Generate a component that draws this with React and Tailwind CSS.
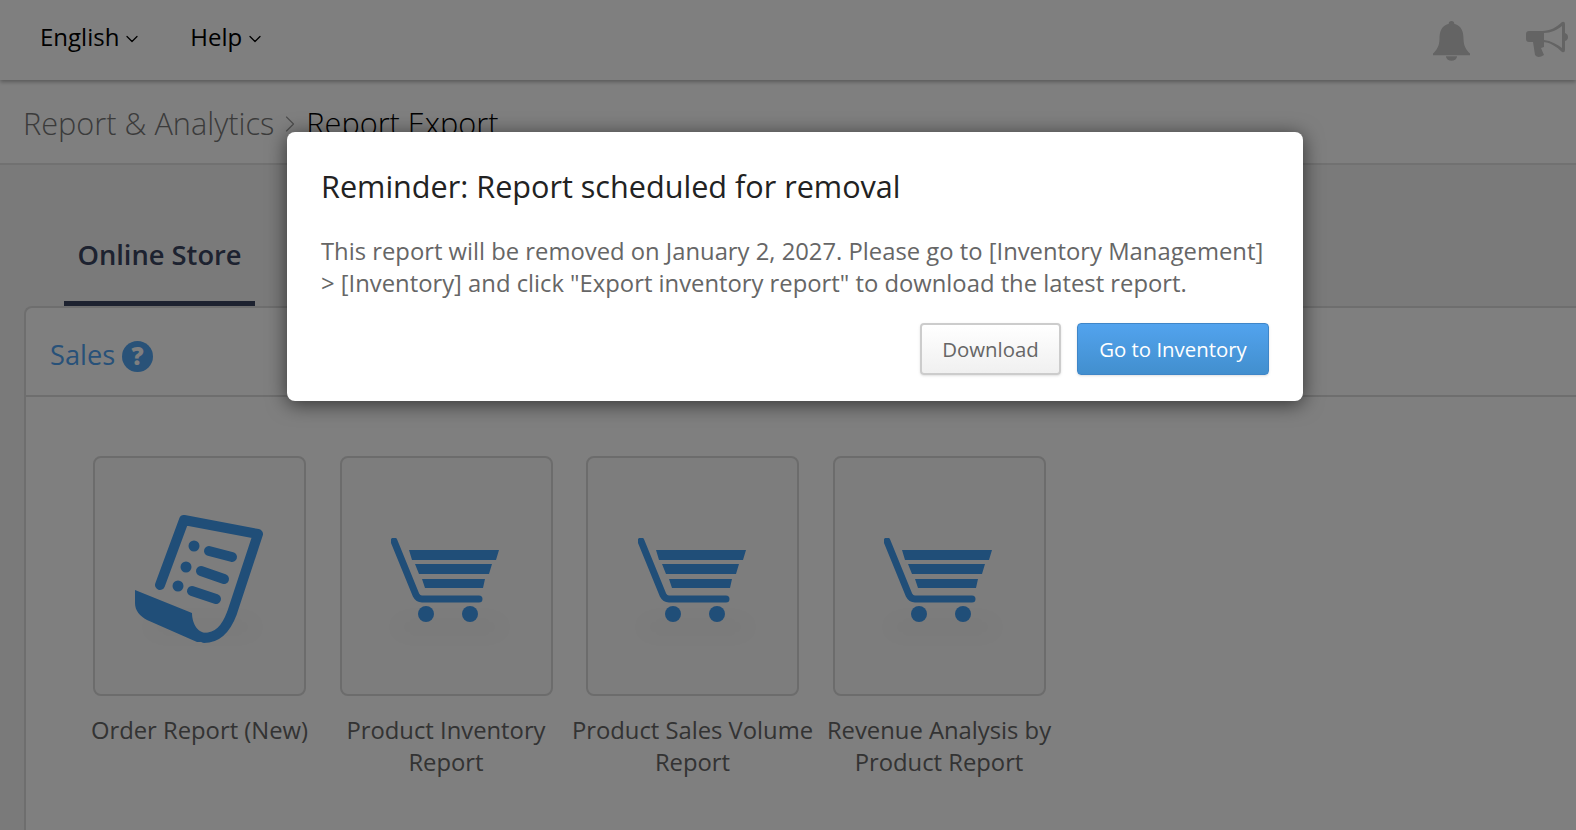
import { ChevronDown, ChevronRight } from 'lucide-react'

const font = { fontFamily: '"Open Sans", sans-serif' }

function OrderIcon() {
  return (
    <svg width="132" height="132" viewBox="0 0 132 132" className="mt-[5px]">
      <path d="M26 72 L50 7 L124 21 L98 100 C92 116 84 125 70 125" fill="none" stroke="#419cf0" strokeWidth="10" strokeLinecap="round" strokeLinejoin="round" />
      <path d="M1 77 L58 100 C58 108 62 120 73 120 C78 120 84 118 90 112 C84 124 74 130 63 129 L13 107 C6 103 1 98 1 90 Z" fill="#419cf0" />
      <circle cx="60" cy="33" r="5.5" fill="#419cf0" />
      <circle cx="52" cy="54" r="5.5" fill="#419cf0" />
      <circle cx="44" cy="73" r="5.5" fill="#419cf0" />
      <path d="M75 38 L98 44 M67 58 L90 66 M58 78 L82 86" stroke="#419cf0" strokeWidth="10" strokeLinecap="round" />
    </svg>
  )
}

function CartIcon() {
  return (
    <svg width="110" height="86" viewBox="0 0 110 86" className="mt-[10px]">
      <path d="M3 3 L25 57 Q27 61 31 61 L88 61" fill="none" stroke="#419cf0" strokeWidth="7" strokeLinecap="round" strokeLinejoin="round" />
      <path d="M18 12 L108 12 L105 22 L21 22 Z M24 26 L101 26 L98 36 L28 36 Z M31 41 L94 41 L92 50 L34 50 Z" fill="#419cf0" />
      <circle cx="35" cy="76" r="8" fill="#419cf0" />
      <circle cx="79" cy="76" r="8" fill="#419cf0" />
    </svg>
  )
}

function ReportCard({ label, icon }) {
  return (
    <div className="w-[213px] flex flex-col items-center shrink-0">
      <div className="relative w-[213px] h-[240px] border-2 border-[#d8d8d8] rounded-lg bg-[#fbfbfb] flex items-center justify-center">
        <div className="absolute left-[50px] top-[160px] w-[115px] h-[18px] rounded-full bg-black/[0.03] blur-md" />
        <div className="relative flex">{icon}</div>
      </div>
      <p className="mt-[18px] w-[250px] -mx-[18px] text-center text-[23.8px] leading-[32px] text-[#666]">{label}</p>
    </div>
  )
}

export default function App() {
  return (
    <div className="relative h-screen overflow-hidden bg-[#f4f4f4]" style={font}>
      <div className="h-20 bg-white shadow-[0_2px_4px_rgba(0,0,0,0.3)] flex items-center justify-between pl-10 pr-2 relative">
        <div className="flex items-center gap-[48px] text-[24px] text-black pb-[6px]">
          <span className="flex items-center gap-[3px]">English <ChevronDown size={20} strokeWidth={1.5} className="mt-[3px]" /></span>
          <span className="flex items-center gap-[3px]">Help <ChevronDown size={20} strokeWidth={1.5} className="mt-[3px]" /></span>
        </div>
        <div className="flex items-center gap-[56px]">
          <svg width="37" height="41" viewBox="0 0 40 44" fill="#c8c8c8">
            <path d="M20 1 a3 3 0 0 1 3 3 C31 6 33 13 33 20 C33 28 36 32 40 36 L40 38 L0 38 L0 36 C4 32 7 28 7 20 C7 13 9 6 17 4 a3 3 0 0 1 3 -3 Z" />
            <path d="M14 39 a6 5 0 0 0 12 0 Z" />
          </svg>
          <svg width="42" height="38" viewBox="0 0 42 38">
            <path d="M3 10 L16 10 C24 10 31 6 36 1 Q39 0 39 3 L39 12 Q42 13 42 16 Q42 19 39 20 L39 29 Q39 32 36 31 C31 26 24 21 16 21 L3 21 Q0 21 0 18 L0 13 Q0 10 3 10 Z" fill="#c8c8c8" />
            <path d="M18 12 C25 12 31 9 36 5 L36 27 C31 23 25 20 18 19 Z" fill="white" />
            <path d="M7 21 L18 21 L18 26 L15 27 L18 34 Q12 38 9 34 Z" fill="#c8c8c8" />
          </svg>
        </div>
      </div>

      <div className="h-[85px] bg-white border-b-2 border-[#e2e2e2] pl-[23px] pt-1 flex items-center text-[30.7px] font-light">
        <span className="text-[#777]">Report &amp; Analytics</span>
        <ChevronRight size={28} strokeWidth={1} className="text-[#999] mx-[2px]" />
        <span className="text-black">Report Export</span>
      </div>

      <div className="pl-6">
        <div className="pt-[61px] pl-10 h-[141px]">
          <div className="w-[191px] h-[80px] border-b-[5px] border-[#3a4560] flex justify-center pt-[9px] text-[27.3px] font-semibold text-[#3a4560]">
            Online Store
          </div>
        </div>
        <div className="border-2 border-r-0 border-[#dcdcdc] rounded-tl-lg h-[600px] bg-[#fefefe]">
          <div className="h-[89px] bg-white rounded-tl-lg border-b-2 border-[#dcdcdc] pl-6 pt-[7px] flex items-center gap-[7px]">
            <span className="text-[27.2px] text-[#4fa2f2]">Sales</span>
            <span className="w-[31px] h-[31px] mt-[2px] rounded-full bg-[#52a4f0] text-white text-[24px] font-extrabold flex items-center justify-center">?</span>
          </div>
          <div className="pt-[59px] pl-[67px] flex gap-[33.5px]">
            <ReportCard label="Order Report (New)" icon={<OrderIcon />} />
            <ReportCard label="Product Inventory Report" icon={<CartIcon />} />
            <ReportCard label="Product Sales Volume Report" icon={<CartIcon />} />
            <ReportCard label="Revenue Analysis by Product Report" icon={<CartIcon />} />
          </div>
        </div>
      </div>

      {/* modal overlay */}
      <div className="absolute inset-0 bg-black/50 flex justify-center items-start pt-[132px]">
        <div className="w-[1016px] h-[269px] bg-white rounded-lg shadow-[0_3px_20px_rgba(0,0,0,0.6)] pt-[33px] px-[34px] translate-x-[7px]">
          <h2 className="text-[30.6px] leading-[42px] text-[#222]">Reminder: Report scheduled for removal</h2>
          <p className="mt-[28px] text-[23.8px] leading-[32px] text-[#666]">
            This report will be removed on January 2, 2027. Please go to [Inventory Management] &gt; [Inventory] and click "Export inventory report" to download the latest report.
          </p>
          <div className="mt-[24px] flex justify-end gap-4">
            <div className="w-[141px] h-[52px] rounded border-2 border-[#ccc] bg-gradient-to-b from-white to-[#f0f0f0] shadow-sm flex items-center justify-center text-[20.4px] text-[#666]">Download</div>
            <div className="w-[192px] h-[52px] rounded border border-[#3f86c8] bg-gradient-to-b from-[#52a3ee] to-[#428fce] shadow-sm flex items-center justify-center text-[20.4px] text-white">Go to Inventory</div>
          </div>
        </div>
      </div>
    </div>
  )
}
